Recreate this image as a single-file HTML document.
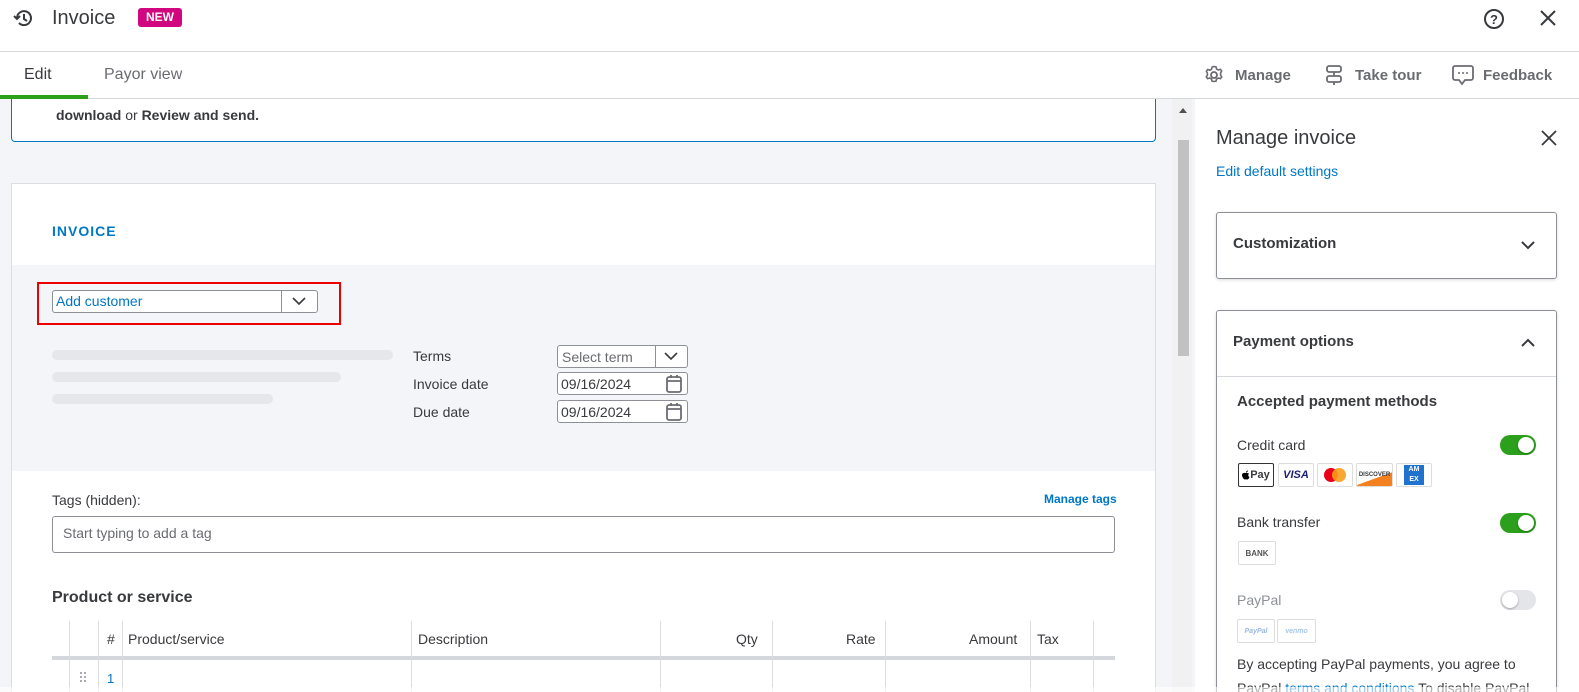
<!DOCTYPE html>
<html><head><style>
*{box-sizing:border-box;margin:0;padding:0}
html,body{width:1579px;height:692px;overflow:hidden}
body{font-family:"Liberation Sans",sans-serif;background:#fff;color:#393a3d;position:relative}
.a{position:absolute}
.t{white-space:nowrap}
.bar{background:#e6e7ea;border-radius:6px;height:10px}
.inp{border:1px solid #8d9096;border-radius:3px;background:#fff}
.card{border:1px solid #ddd;border-radius:2px;height:24px;background:#fff;font-size:9px;font-weight:bold;display:flex;align-items:center;justify-content:center}
.tog{width:36px;height:20px;border-radius:10px;background:#2ca01c}
.tog::after{content:"";position:absolute;width:16px;height:16px;border-radius:50%;background:#fff;top:2px;right:2px;box-shadow:0 1px 2px rgba(0,0,0,.3)}
.tog.off::after{right:auto;left:2px}
.th{font-size:14px;color:#393a3d;top:631px}
.vl{top:621px;height:71px;width:1px;background:#ddd}
</style></head><body>
<svg class="a" style="left:13px;top:8px" width="22" height="20" viewBox="0 0 22 20"><path d="M4 10a7 7 0 1 1 2 5" fill="none" stroke="#393a3d" stroke-width="2"/><path d="M1 8l3 3 3-3" fill="none" stroke="#393a3d" stroke-width="2"/><path d="M11 6v5l3 2" fill="none" stroke="#393a3d" stroke-width="2"/></svg>
<div class="a t" style="left:52px;top:7px;font-size:20px;color:#393a3d">Invoice</div>
<div class="a t" style="left:138px;top:8px;width:44px;height:19px;background:#d1077f;color:#fff;border-radius:3px;font-size:12px;font-weight:bold;text-align:center;line-height:19px">NEW</div>
<svg class="a" style="left:1483px;top:8px" width="22" height="22"><circle cx="11" cy="11" r="9" fill="none" stroke="#393a3d" stroke-width="2"/><text x="11" y="16" font-size="13" font-weight="bold" text-anchor="middle" fill="#393a3d" font-family="Liberation Sans">?</text></svg>
<svg class="a" style="left:1540px;top:10px" width="16" height="16"><path d="M1 1l14 14M15 1L1 15" stroke="#393a3d" stroke-width="2"/></svg>
<div class="a" style="left:0;top:51px;width:1579px;height:1px;background:#d4d7dc"></div>
<div class="a t" style="left:24px;top:66px;font-size:16px">Edit</div>
<div class="a t" style="left:104px;top:66px;font-size:16px;color:#6b6c72">Payor view</div>
<div class="a" style="left:0;top:98px;width:1579px;height:1px;background:#d4d7dc"></div>
<div class="a" style="left:0;top:95px;width:88px;height:4px;background:#2ca01c"></div>
<svg class="a" style="left:1204px;top:65px" width="20" height="20" viewBox="0 0 20 20"><circle cx="10" cy="10" r="3" fill="none" stroke="#6b6c72" stroke-width="1.8"/><path d="M10 1.5l2 .3.5 2.2 1.8 1 2.1-.7 1.3 1.7-1.1 1.9v2.2l1.1 1.9-1.3 1.7-2.1-.7-1.8 1-.5 2.2-2 .3-2-.3-.5-2.2-1.8-1-2.1.7-1.3-1.7 1.1-1.9V8.1L2.4 6.2l1.3-1.7 2.1.7 1.8-1 .5-2.2z" fill="none" stroke="#6b6c72" stroke-width="1.6"/></svg>
<div class="a t" style="left:1235px;top:67px;font-size:15px;color:#6b6c72;font-weight:bold">Manage</div>
<svg class="a" style="left:1325px;top:64px" width="18" height="22"><rect x="2" y="2" width="14" height="6" rx="2" fill="none" stroke="#6b6c72" stroke-width="1.8"/><rect x="2" y="12" width="14" height="6" rx="2" fill="none" stroke="#6b6c72" stroke-width="1.8"/><path d="M9 8v4M9 18v3" stroke="#6b6c72" stroke-width="1.8"/></svg>
<div class="a t" style="left:1355px;top:67px;font-size:15px;color:#6b6c72;font-weight:bold">Take tour</div>
<svg class="a" style="left:1452px;top:64px" width="22" height="22"><path d="M3 2h16a2 2 0 0 1 2 2v10a2 2 0 0 1-2 2h-6l-3 4-3-4H3a2 2 0 0 1-2-2V4a2 2 0 0 1 2-2z" fill="none" stroke="#6b6c72" stroke-width="1.8"/><circle cx="7" cy="9" r="1" fill="#6b6c72"/><circle cx="11" cy="9" r="1" fill="#6b6c72"/><circle cx="15" cy="9" r="1" fill="#6b6c72"/></svg>
<div class="a t" style="left:1483px;top:67px;font-size:15px;color:#6b6c72;font-weight:bold">Feedback</div>
<div class="a" style="left:0;top:99px;width:1195px;height:593px;background:#f4f5f8"></div>
<div class="a" style="left:11px;top:99px;width:1145px;height:43px;background:#fff;border:1px solid #0077c5;border-top:none;border-radius:0 0 4px 4px"></div>
<div class="a t" style="left:56px;top:107px;font-size:14px;color:#393a3d"><b>download</b> or <b>Review and send.</b></div>
<div class="a" style="left:1172px;top:99px;width:20px;height:593px;background:#f1f1f1"></div>
<div class="a" style="left:1178px;top:140px;width:11px;height:216px;background:#c1c1c1"></div>
<div class="a" style="left:1179px;top:108px;border-left:4px solid transparent;border-right:4px solid transparent;border-bottom:5px solid #505050"></div>
<div class="a" style="left:11px;top:183px;width:1145px;height:509px;background:#fff;border:1px solid #dcdde0;border-bottom:none"></div>
<div class="a t" style="left:52px;top:223px;font-size:14px;font-weight:bold;color:#0077c5;letter-spacing:1px">INVOICE</div>
<div class="a" style="left:12px;top:265px;width:1143px;height:206px;background:#f4f5f8"></div>
<div class="a" style="left:37px;top:282px;width:304px;height:43px;border:2px solid #e00"></div>
<div class="a inp" style="left:52px;top:290px;width:266px;height:23px"></div>
<div class="a" style="left:281px;top:291px;width:1px;height:21px;background:#8d9096"></div>
<div class="a t" style="left:56px;top:293px;font-size:14px;color:#0077c5">Add customer</div>
<svg class="a" style="left:291px;top:296px" width="16" height="10"><path d="M2 2l6 6 6-6" fill="none" stroke="#393a3d" stroke-width="1.6"/></svg>
<div class="a bar" style="left:52px;top:350px;width:341px"></div>
<div class="a bar" style="left:52px;top:372px;width:289px"></div>
<div class="a bar" style="left:52px;top:394px;width:221px"></div>
<div class="a t" style="left:413px;top:348px;font-size:14px">Terms</div>
<div class="a t" style="left:413px;top:376px;font-size:14px">Invoice date</div>
<div class="a t" style="left:413px;top:404px;font-size:14px">Due date</div>
<div class="a inp" style="left:557px;top:345px;width:131px;height:23px"></div>
<div class="a" style="left:655px;top:346px;width:1px;height:21px;background:#8d9096"></div>
<div class="a t" style="left:562px;top:349px;font-size:14px;color:#6b6c72">Select term</div>
<svg class="a" style="left:663px;top:351px" width="16" height="10"><path d="M2 2l6 6 6-6" fill="none" stroke="#393a3d" stroke-width="1.6"/></svg>
<div class="a inp" style="left:557px;top:372px;width:131px;height:23px"></div>
<div class="a t" style="left:561px;top:376px;font-size:14px">09/16/2024</div>
<div class="a inp" style="left:557px;top:400px;width:131px;height:23px"></div>
<div class="a t" style="left:561px;top:404px;font-size:14px">09/16/2024</div>
<svg class="a" style="left:665px;top:374px" width="18" height="20"><rect x="2" y="3" width="14" height="15" rx="2" fill="none" stroke="#6b6c72" stroke-width="1.8"/><path d="M2 7h14M6 1v3M12 1v3" stroke="#6b6c72" stroke-width="1.8"/></svg>
<svg class="a" style="left:665px;top:402px" width="18" height="20"><rect x="2" y="3" width="14" height="15" rx="2" fill="none" stroke="#6b6c72" stroke-width="1.8"/><path d="M2 7h14M6 1v3M12 1v3" stroke="#6b6c72" stroke-width="1.8"/></svg>
<div class="a t" style="left:52px;top:492px;font-size:14px">Tags (hidden):</div>
<div class="a t" style="left:1044px;top:492px;font-size:12px;font-weight:bold;color:#0077c5">Manage tags</div>
<div class="a inp" style="left:52px;top:516px;width:1063px;height:37px"></div>
<div class="a t" style="left:63px;top:525px;font-size:14px;color:#6b6c72">Start typing to add a tag</div>
<div class="a t" style="left:52px;top:589px;font-size:16px;font-weight:bold">Product or service</div>
<div class="a" style="left:52px;top:656px;width:1063px;height:4px;background:#d4d7dc"></div>
<div class="a vl" style="left:69px"></div><div class="a vl" style="left:98px"></div><div class="a vl" style="left:122px"></div><div class="a vl" style="left:411px"></div><div class="a vl" style="left:660px"></div><div class="a vl" style="left:772px"></div><div class="a vl" style="left:885px"></div><div class="a vl" style="left:1030px"></div><div class="a vl" style="left:1093px"></div>
<div class="a t th" style="left:107px">#</div>
<div class="a t th" style="left:128px">Product/service</div>
<div class="a t th" style="left:418px">Description</div>
<div class="a t th" style="left:736px">Qty</div>
<div class="a t th" style="left:846px">Rate</div>
<div class="a t th" style="left:969px">Amount</div>
<div class="a t th" style="left:1037px">Tax</div>
<div class="a t" style="left:107px;top:671px;font-size:13px;color:#0077c5">1</div>
<svg class="a" style="left:79px;top:671px" width="8" height="14"><g fill="#8d9096"><circle cx="2" cy="2" r="1"/><circle cx="6" cy="2" r="1"/><circle cx="2" cy="6" r="1"/><circle cx="6" cy="6" r="1"/><circle cx="2" cy="10" r="1"/><circle cx="6" cy="10" r="1"/></g></svg>
<div class="a t" style="left:1216px;top:127px;font-size:20px">Manage invoice</div>
<svg class="a" style="left:1541px;top:130px" width="16" height="16"><path d="M1 1l14 14M15 1L1 15" stroke="#393a3d" stroke-width="1.8"/></svg>
<div class="a t" style="left:1216px;top:163px;font-size:14px;color:#0077c5">Edit default settings</div>
<div class="a" style="left:1216px;top:212px;width:341px;height:67px;border:1px solid #8d9096;border-radius:3px;box-shadow:0 1px 3px rgba(0,0,0,.15)"></div>
<div class="a t" style="left:1233px;top:235px;font-size:15px;font-weight:bold">Customization</div>
<svg class="a" style="left:1520px;top:240px" width="16" height="10"><path d="M2 2l6 6 6-6" fill="none" stroke="#393a3d" stroke-width="2"/></svg>
<div class="a" style="left:1216px;top:310px;width:341px;height:382px;border:1px solid #8d9096;border-bottom:none;border-radius:3px 3px 0 0;box-shadow:0 1px 3px rgba(0,0,0,.15)"></div>
<div class="a t" style="left:1233px;top:333px;font-size:15px;font-weight:bold">Payment options</div>
<svg class="a" style="left:1520px;top:338px" width="16" height="10"><path d="M2 8l6-6 6 6" fill="none" stroke="#393a3d" stroke-width="2"/></svg>
<div class="a" style="left:1217px;top:376px;width:339px;height:1px;background:#d4d7dc"></div>
<div class="a t" style="left:1237px;top:393px;font-size:15px;font-weight:bold">Accepted payment methods</div>
<div class="a t" style="left:1237px;top:437px;font-size:14px">Credit card</div>
<div class="a tog" style="left:1500px;top:435px"></div>
<div class="a card" style="left:1238px;top:463px;width:36px;border:1px solid #333;font-size:11px"><svg width="8" height="10" viewBox="0 0 8 10"><path d="M4 3c1-.3 2 0 3 .6C6 4.5 6 6.5 7.5 7 7 8.5 6 9.8 5 9.5 4.5 9.3 3.5 9.3 3 9.5 2 9.8 0 7 0 5 0 3 2 2.5 4 3z M4 2.5C4 1.5 5 .5 6 .5 6 1.5 5 2.5 4 2.5z" fill="#000"/></svg>Pay</div>
<div class="a card" style="left:1278px;top:463px;width:36px;color:#1a1f71;font-size:11px;font-style:italic">VISA</div>
<div class="a card" style="left:1317px;top:463px;width:36px"><svg width="26" height="16"><circle cx="9" cy="8" r="7" fill="#eb001b"/><circle cx="17" cy="8" r="7" fill="#f79e1b" opacity=".9"/></svg></div>
<div class="a card" style="left:1356px;top:463px;width:37px;font-size:6px;background:linear-gradient(160deg,#fff 60%,#f48120 61%)">DISCOVER</div>
<div class="a card" style="left:1396px;top:463px;width:36px"><div style="width:20px;height:20px;background:#1f72cd;color:#fff;font-size:7px;text-align:center;line-height:10px">AM<br>EX</div></div>
<div class="a t" style="left:1237px;top:514px;font-size:14px">Bank transfer</div>
<div class="a tog" style="left:1500px;top:513px"></div>
<div class="a card" style="left:1238px;top:541px;width:38px;font-size:8px;color:#555">BANK</div>
<div class="a t" style="left:1237px;top:592px;font-size:14px;color:#8d9096">PayPal</div>
<div class="a tog off" style="left:1500px;top:590px;background:#e3e5e8"></div>
<div class="a card" style="left:1237px;top:619px;width:38px;font-size:7px;color:#9bb8e0;font-style:italic">PayPal</div>
<div class="a card" style="left:1277px;top:619px;width:39px;font-size:7px;color:#a8c6e8;font-style:italic">venmo</div>
<div class="a t" style="left:1237px;top:656px;font-size:14px">By accepting PayPal payments, you agree to</div>
<div class="a t" style="left:1237px;top:680px;font-size:14px">PayPal <span style="color:#0077c5">terms and conditions</span> To disable PayPal</div>
<div class="a" style="left:0;top:687px;width:1579px;height:5px;background:rgba(255,255,255,.6)"></div>
</body></html>
